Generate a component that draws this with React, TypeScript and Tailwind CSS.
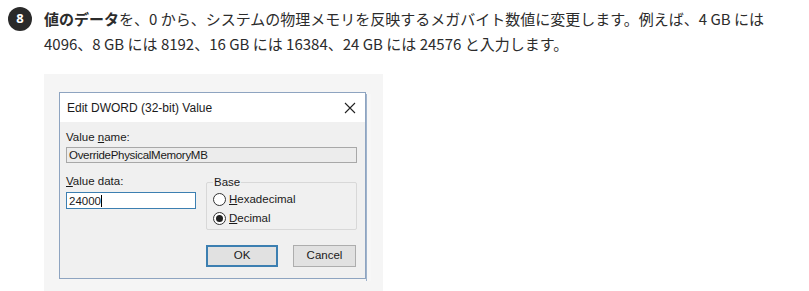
import React from "react";

const jp = "font-['Noto_Sans_CJK_JP','Noto_Sans',sans-serif]";
const ui = "font-['Liberation_Sans',Arial,sans-serif]";

function Radio({ checked, label, accel }: { checked?: boolean; label: string; accel: string }) {
  return (
    <div className="flex items-center gap-[3px] h-[19px]">
      <span className="flex h-[13px] w-[13px] items-center justify-center rounded-full border border-[#333] bg-white">
        {checked && <span className="h-[7px] w-[7px] rounded-full bg-[#222]" />}
      </span>
      <span>
        <span className="underline">{accel}</span>
        {label}
      </span>
    </div>
  );
}

export default function App() {
  return (
    <div className="w-[809px] h-[291px] overflow-hidden bg-white">
      {/* Step text */}
      <div className="flex gap-[12px] pl-[8px] pt-[6px]">
        <div className="mt-[1px] flex h-[24px] w-[24px] shrink-0 items-center justify-center rounded-full bg-[#2a2a2a] text-[13px] font-bold text-white font-['Open_Sans',sans-serif]">
          8
        </div>
        <p className={`${jp} text-[15px] leading-[25px] text-[#2c2c2c]`}>
          <span className="font-bold">値のデータ</span>を、0 から、システムの物理メモリを反映するメガバイト数値に変更します。例えば、4 GB には
          <br />
          4096、8 GB には 8192、16 GB には 16384、24 GB には 24576 と入力します。
        </p>
      </div>

      {/* Screenshot frame */}
      <div className="ml-[44px] mt-[18px] w-[339px] h-[230px] bg-[#f5f5f5] pl-[15px] pt-[18px]">
        <div className="flex">
          <div className={`${ui} w-[307px] h-[187px] border border-[#8ea4c0] bg-[#f0f0f0] text-[11.5px] text-[#1a1a1a]`}>
            {/* Title bar */}
            <div className="flex h-[29px] items-center justify-between bg-white pl-[7px] pr-[9px]">
              <span className="text-[12px]">Edit DWORD (32-bit) Value</span>
              <svg width="12" height="12" viewBox="0 0 12 12" stroke="#222" strokeWidth="1.1">
                <path d="M1 1 L11 11 M11 1 L1 11" />
              </svg>
            </div>
            {/* Body */}
            <div className="px-[6px] pt-[8px]">
              <div className="leading-[14px]">
                Value <span className="underline">n</span>ame:
              </div>
              <div className="mt-[3px] h-[16px] w-[291px] border border-[#a8a8a8] bg-[#ececec] pl-[2px] leading-[14px] tracking-[-0.3px]">
                OverridePhysicalMemoryMB
              </div>
              <div className="mt-[11px] flex gap-[10px]">
                <div className="w-[130px]">
                  <div className="leading-[14px]">
                    <span className="underline">V</span>alue data:
                  </div>
                  <div className="mt-[4px] h-[17px] w-[130px] border border-[#3c7fb1] bg-white pl-[2px] leading-[15px]">
                    24000<span className="inline-block h-[12px] w-px translate-y-[2px] bg-black" />
                  </div>
                </div>
                <div className="relative mt-[8px] h-[48px] w-[151px] rounded-[2px] border border-[#d8d8d8] pl-[6px] pt-[7px]">
                  <span className="absolute -top-[8px] left-[6px] bg-[#f0f0f0] px-[1px] leading-[14px]">Base</span>
                  <Radio label="exadecimal" accel="H" />
                  <Radio checked label="ecimal" accel="D" />
                </div>
              </div>
              <div className="mt-[15px] flex justify-end gap-[15px] pr-[3px]">
                <div className="flex h-[22px] w-[72px] items-center justify-center border-2 border-[#3c7fb1] bg-[#e1e1e1]">
                  OK
                </div>
                <div className="flex h-[22px] w-[63px] items-center justify-center border border-[#adadad] bg-[#e1e1e1]">
                  Cancel
                </div>
              </div>
            </div>
          </div>
          {/* Edge of the window behind */}
          <div className="mt-[2px] h-[187px] w-[5px] border-l border-[#9fb3cc] bg-[#f7f7f7]" />
        </div>
      </div>
    </div>
  );
}
